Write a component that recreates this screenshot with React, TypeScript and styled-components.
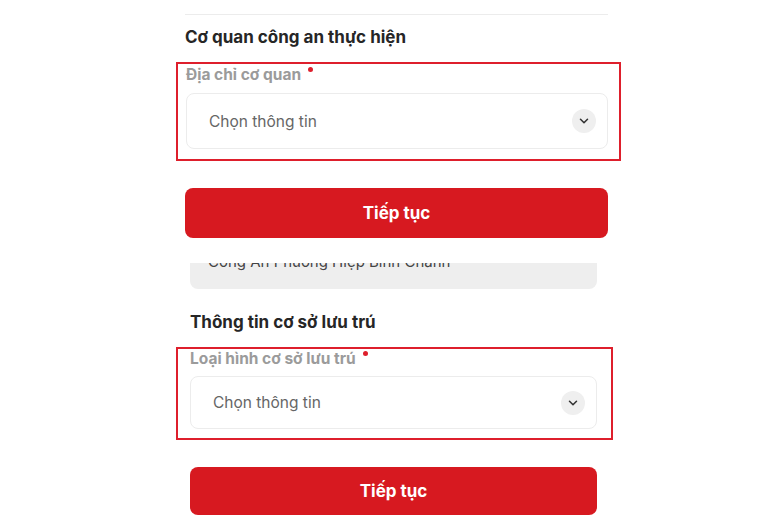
import styled, { createGlobalStyle } from 'styled-components';
import { ChevronDown } from 'lucide-react';

const GlobalStyle = createGlobalStyle`
  body {
    margin: 0;
    background: #ffffff;
    font-family: Inter, "Noto Sans", "Liberation Sans", sans-serif;
    -webkit-font-smoothing: antialiased;
  }
`;

interface PanelProps {
  $left: number;
  $width: number;
}

interface FieldProps {
  label: string;
  placeholder: string;
  height: number;
  gap?: number;
}

const SelectField = ({ label, placeholder, height, gap }: FieldProps) => (
  <>
    <Label>
      {label}
      <Required />
    </Label>
    <SelectBox $height={height} $gap={gap}>
      <Placeholder>{placeholder}</Placeholder>
      <ChevronCircle>
        <ChevronDown size={14} strokeWidth={2.6} color="#333" />
      </ChevronCircle>
    </SelectBox>
  </>
);

const App = () => {
  return (
    <>
      <GlobalStyle />
      <Page>
        <Panel $left={185} $width={423}>
          <Divider />
          <SectionTitle>Cơ quan công an thực hiện</SectionTitle>
          <TopFrame>
            <SelectField label="Địa chỉ cơ quan" placeholder="Chọn thông tin" height={56} />
          </TopFrame>
          <PrimaryButton $height={50} $top={27}>
            Tiếp tục
          </PrimaryButton>
        </Panel>

        <Panel $left={190} $width={407}>
          <ReadonlyBox>
            <ReadonlyText>Công An Phường Hiệp Bình Chánh</ReadonlyText>
          </ReadonlyBox>
          <SectionTitle $top={22}>Thông tin cơ sở lưu trú</SectionTitle>
          <BottomFrame>
            <SelectField
              label="Loại hình cơ sở lưu trú"
              placeholder="Chọn thông tin"
              height={53}
              gap={7}
            />
          </BottomFrame>
          <PrimaryButton $height={48} $top={27}>
            Tiếp tục
          </PrimaryButton>
        </Panel>
      </Page>
    </>
  );
};

const Page = styled.div`
  width: 780px;
  height: 520px;
  overflow: hidden;
  display: flex;
  flex-direction: column;
`;

const Panel = styled.section<PanelProps>`
  margin-left: ${(p) => p.$left}px;
  width: ${(p) => p.$width}px;
  display: flex;
  flex-direction: column;
`;

const Divider = styled.div`
  margin-top: 14px;
  height: 1px;
  background: #ececec;
`;

const SectionTitle = styled.h2<{ $top?: number }>`
  margin: ${(p) => p.$top ?? 11}px 0 0;
  font-size: 17px;
  line-height: 22px;
  font-weight: 700;
  color: #262626;
`;

const Frame = styled.div`
  border: 2px solid #de1f2c;
  box-sizing: border-box;
  display: flex;
  flex-direction: column;
`;

const TopFrame = styled(Frame)`
  margin: 14px 0 0 -9px;
  width: 445px;
  padding: 1px 11px 10px 8px;
`;

const BottomFrame = styled(Frame)`
  margin: 14px 0 0 -14px;
  width: 437px;
  padding: 0 14px 9px 12px;
`;

const Label = styled.div`
  font-size: 15.5px;
  line-height: 20px;
  font-weight: 700;
  color: #9b9b9b;
  display: flex;
  align-items: flex-start;
`;

const Required = styled.span`
  width: 5px;
  height: 5px;
  border-radius: 50%;
  background: #de1f2c;
  margin: 2px 0 0 7px;
`;

const SelectBox = styled.div<{ $height: number; $gap?: number }>`
  margin-top: ${(p) => p.$gap ?? 8}px;
  height: ${(p) => p.$height}px;
  box-sizing: border-box;
  border: 1px solid #ececec;
  border-radius: 8px;
  background: #ffffff;
  display: flex;
  align-items: center;
  justify-content: space-between;
  padding: 0 11px 0 22px;
`;

const Placeholder = styled.span`
  font-size: 15.5px;
  color: #666666;
`;

const ChevronCircle = styled.span`
  width: 24px;
  height: 24px;
  border-radius: 50%;
  background: #efefef;
  display: flex;
  align-items: center;
  justify-content: center;
`;

const PrimaryButton = styled.button<{ $height: number; $top: number }>`
  margin-top: ${(p) => p.$top}px;
  height: ${(p) => p.$height}px;
  border: none;
  border-radius: 8px;
  background: #d71920;
  color: #ffffff;
  font-family: inherit;
  font-size: 17px;
  font-weight: 700;
  cursor: pointer;
`;

const ReadonlyBox = styled.div`
  margin-top: 25px;
  height: 26px;
  overflow: hidden;
  background: #eeeeee;
  border-radius: 0 0 8px 8px;
  padding-left: 18px;
`;

const ReadonlyText = styled.div`
  margin-top: -11px;
  font-size: 15px;
  line-height: 20px;
  color: #444444;
`;

export default App;
